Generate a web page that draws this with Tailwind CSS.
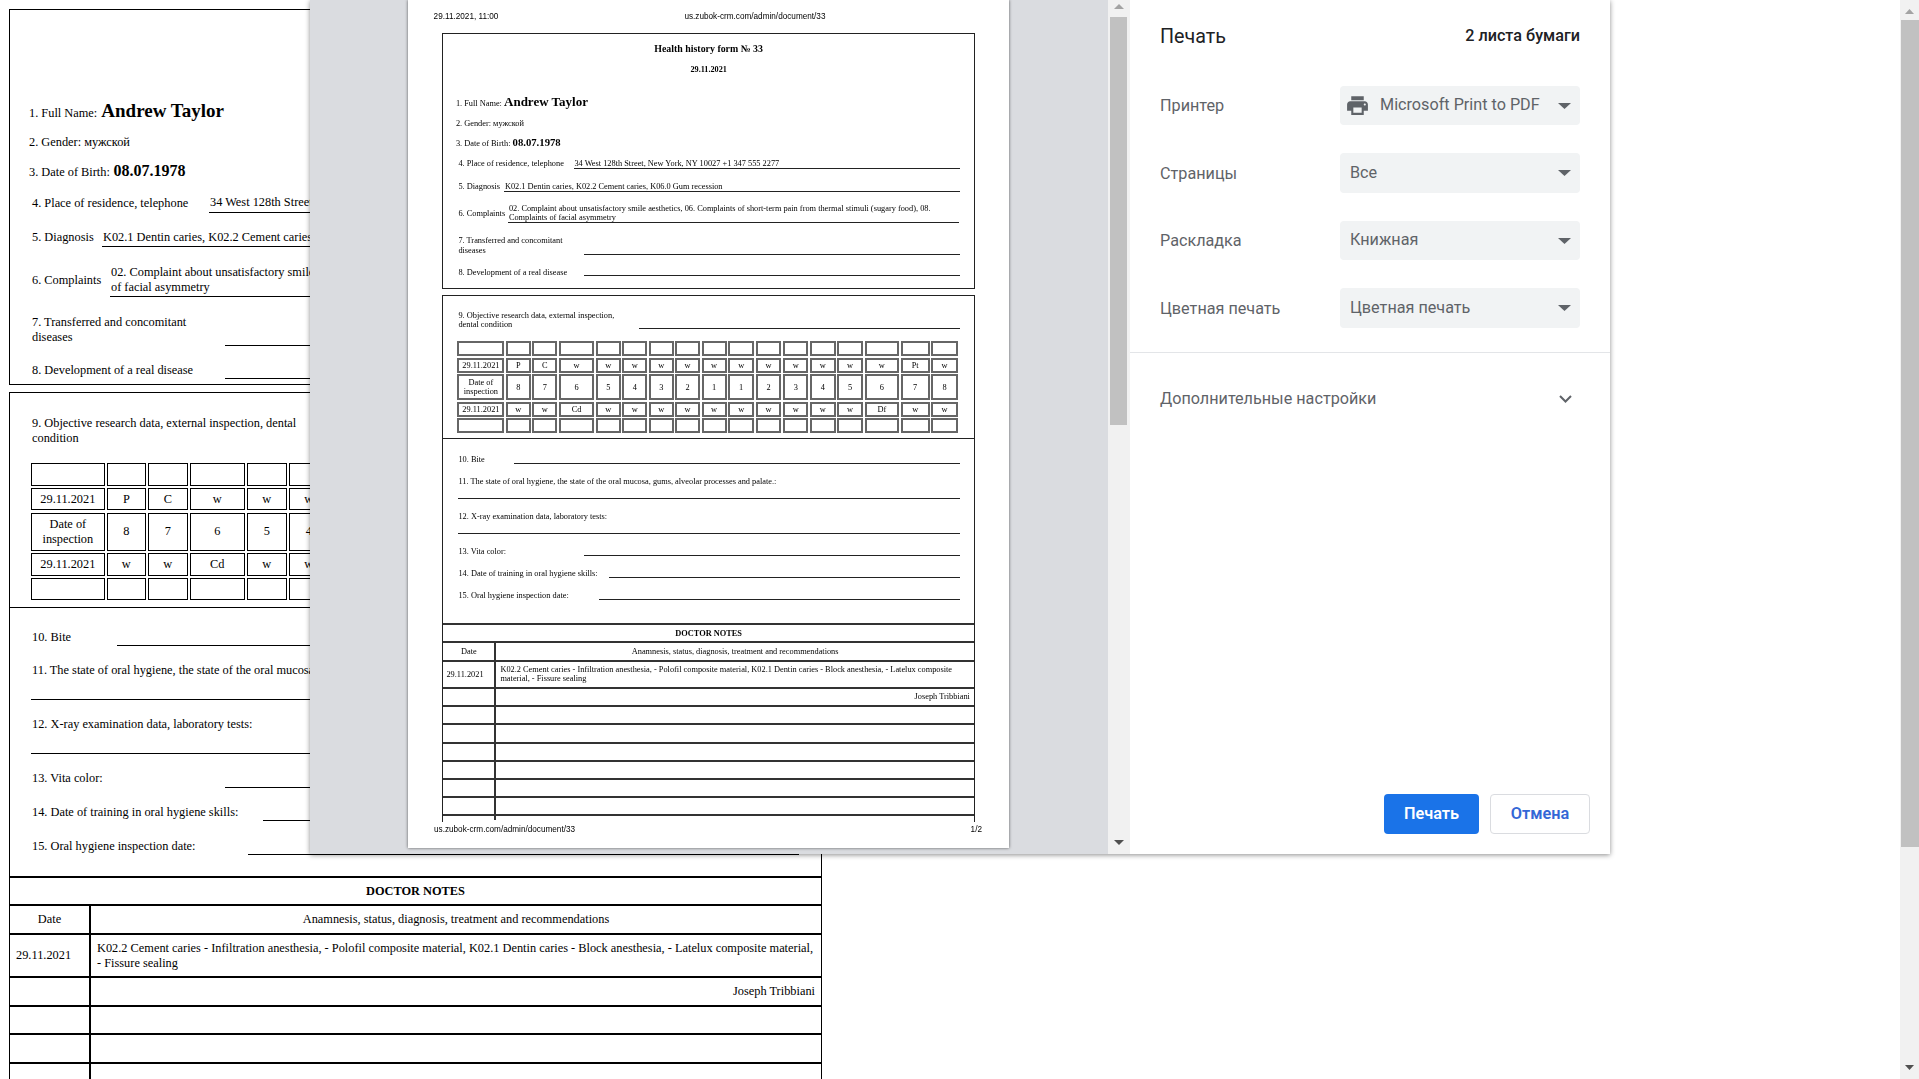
<!DOCTYPE html>
<html lang="ru">
<head>
    <meta charset="UTF-8">
    <title>Печать</title>
    <script src="https://cdn.jsdelivr.net/npm/@tailwindcss/browser@4"></script>
</head>
<body class="relative flex justify-between w-[1919px] h-[1079px] overflow-hidden bg-white text-black">

    <!-- document behind the print dialog -->
    <div class="w-[813px] ml-[9px] pt-[9px] font-['Liberation_Serif',serif] text-[12.35px] leading-[15px]">
        <section class="h-[376px] border border-black overflow-hidden">
            <div class="flex items-baseline mt-[90px] pl-[19px] h-[22px]">1. Full Name:&nbsp;<b class="ml-[1px] text-[19px] leading-[22px]">Andrew Taylor</b></div>
            <div class="mt-[12.5px] pl-[19px]">2. Gender: мужской</div>
            <div class="flex items-baseline mt-[12.5px] pl-[19px] h-[18px]">3. Date of Birth:&nbsp;<b class="ml-[0.5px] text-[16px] leading-[18px]">08.07.1978</b></div>
            <div class="flex items-end mt-[14.5px] pl-[22px] pr-[22px]">
                <span class="w-[177px] pb-[2px]">4. Place of residence, telephone</span>
                <span class="flex-1 border-b border-black pl-[1px] pb-[2px] whitespace-nowrap overflow-hidden">34 West 128th Street, New York, NY 10027 +1 347 555 2277</span>
            </div>
            <div class="flex items-end mt-[17.5px] pl-[22px] pr-[22px]">
                <span class="w-[70px] pb-[1.5px]">5. Diagnosis</span>
                <span class="flex-1 border-b border-black pl-[1px] pb-[0.5px]">K02.1 Dentin caries, K02.2 Cement caries, K06.0 Gum recession</span>
            </div>
            <div class="flex items-center mt-[18px] pl-[22px] pr-[22px]">
                <span class="w-[78px]">6. Complaints</span>
                <span class="flex-1 border-b border-black pl-[1px] pb-[1px] whitespace-nowrap overflow-hidden">02. Complaint about unsatisfactory smile aesthetics, 06. Complaints of short-term pain from thermal stimuli (sugary food), 08. Complaints<br>of facial asymmetry</span>
            </div>
            <div class="flex items-end mt-[18px] pl-[22px] pr-[22px]">
                <span class="w-[193px] pb-[1px]">7. Transferred and concomitant<br>diseases</span>
                <span class="flex-1 border-b border-black"></span>
            </div>
            <div class="flex items-end mt-[17px] pl-[22px] pr-[22px]">
                <span class="w-[193px] pb-[1px]">8. Development of a real disease</span>
                <span class="flex-1 border-b border-black"></span>
            </div>
        </section>

        <section class="mt-[7px] border-x border-t border-black">
            <div class="pb-[7px] border-b border-black">
                <div class="flex items-end mt-[23px] pl-[22px] pr-[22px]">
                    <span class="w-[400px]">9. Objective research data, external inspection, dental<br>condition</span>
                    <span class="flex-1 border-b border-black"></span>
                </div>
                <div id="bg-teeth" class="grid grid-cols-[73.7px_38.7px_39.7px_54.7px_39.7px_39.7px_39.7px_39.7px_39.7px_39.7px_39.7px_39.7px_39.7px_39.7px_54.7px_39.7px_39.7px] grid-rows-[22.5px_22px_38px_22.5px_22px] gap-x-[2.3px] gap-y-[2.5px] mt-[17px] ml-[21px] w-max"></div>
            </div>

            <div class="flex items-end mt-[21.5px] pl-[22px] pr-[22px]">
                <span class="w-[85px] pb-[1px]">10. Bite</span>
                <span class="flex-1 border-b border-black"></span>
            </div>
            <div class="mt-[17px] pl-[22px] whitespace-nowrap">11. The state of oral hygiene, the state of the oral mucosa, gums, alveolar processes and palate.:</div>
            <div class="mt-[21.7px] ml-[21px] mr-[22px] border-t border-black"></div>
            <div class="mt-[16.5px] pl-[22px]">12. X-ray examination data, laboratory tests:</div>
            <div class="mt-[21.7px] ml-[21px] mr-[22px] border-t border-black"></div>
            <div class="flex items-end mt-[16.5px] pl-[22px] pr-[22px]">
                <span class="w-[193px] pb-[2px]">13. Vita color:</span>
                <span class="flex-1 border-b border-black"></span>
            </div>
            <div class="flex items-end mt-[17px] pl-[22px] pr-[22px]">
                <span class="w-[231px] pb-[1.5px]">14. Date of training in oral hygiene skills:</span>
                <span class="flex-1 border-b border-black"></span>
            </div>
            <div class="flex items-end mt-[17.5px] pl-[22px] pr-[22px]">
                <span class="w-[216px] pb-[1px]">15. Oral hygiene inspection date:</span>
                <span class="flex-1 border-b border-black"></span>
            </div>

            <div class="mt-[21.5px]">
                <div class="h-[27.5px] border-t-2 border-black flex items-center justify-center font-bold">DOCTOR NOTES</div>
                <div class="flex h-[29px] border-t-2 border-black">
                    <div class="w-[81px] border-r-2 border-black flex items-center justify-center">Date</div>
                    <div class="flex-1 flex items-center justify-center">Anamnesis, status, diagnosis, treatment and recommendations</div>
                </div>
                <div class="flex h-[43px] border-t-2 border-black">
                    <div class="w-[81px] border-r-2 border-black flex items-center pl-[6px]">29.11.2021</div>
                    <div class="flex-1 flex items-center pl-[6px] pt-[2px]"><span class="whitespace-nowrap">K02.2 Cement caries - Infiltration anesthesia, - Polofil composite material, K02.1 Dentin caries - Block anesthesia, - Latelux composite material,<br>- Fissure sealing</span></div>
                </div>
                <div class="flex h-[29.5px] border-t-2 border-black">
                    <div class="w-[81px] border-r-2 border-black"></div>
                    <div class="flex-1 flex items-center justify-end pr-[6px]">Joseph Tribbiani</div>
                </div>
                <div class="flex h-[28px] border-t-2 border-black"><div class="w-[81px] border-r-2 border-black"></div></div>
                <div class="flex h-[29px] border-t-2 border-black"><div class="w-[81px] border-r-2 border-black"></div></div>
                <div class="flex h-[29px] border-t-2 border-black"><div class="w-[81px] border-r-2 border-black"></div></div>
            </div>
        </section>
    </div>

    <!-- browser scrollbar -->
    <div class="relative w-[19px] h-full bg-[#f1f1f1]">
        <svg class="absolute left-[5px] top-[9px]" width="9" height="5" viewBox="0 0 9 5"><path d="M4.5 0L9 5H0z" fill="#a3a3a3"/></svg>
        <div class="absolute left-[1px] right-0 top-[20px] h-[827px] bg-[#c1c1c1]"></div>
        <svg class="absolute left-[5px] bottom-[9px]" width="9" height="5" viewBox="0 0 9 5"><path d="M0 0h9L4.5 5z" fill="#505050"/></svg>
    </div>

    <!-- print dialog -->
    <div class="absolute left-[310px] top-0 flex w-[1300px] h-[854px] shadow-[0_1px_5px_rgba(0,0,0,0.45)]">

        <div class="w-[798px] h-full bg-[#dadce0] overflow-hidden">
            <div class="ml-[98px] w-[601px] h-[848px] bg-white shadow-[0_0_3px_rgba(0,0,0,0.6)]">
                <div class="blur-[0.25px] text-black">
                    <div class="flex items-center h-[33px] pt-[2px] pl-[25.6px] font-['Liberation_Sans',sans-serif] text-[8.2px]">
                        <span>29.11.2021, 11:00</span>
                        <span class="ml-[186px]">us.zubok-crm.com/admin/document/33</span>
                    </div>

                    <div class="ml-[34.4px] w-[532.5px] font-['Liberation_Serif',serif] text-[8.33px] leading-[9px]">
                        <section class="h-[255.5px] border border-[#222] overflow-hidden">
                            <div class="mt-[9.7px] text-center font-bold text-[9.9px] leading-[10px]">Health history form № 33</div>
                            <div class="mt-[11.3px] text-center font-bold text-[8.2px] leading-[10px]">29.11.2021</div>
                            <div class="flex items-baseline mt-[20.2px] h-[14px] pl-[12.5px]">1. Full Name:&nbsp;<b class="text-[13px] leading-[14px]">Andrew Taylor</b></div>
                            <div class="mt-[10px] pl-[12.5px] leading-[10px]">2. Gender: мужской</div>
                            <div class="flex items-baseline mt-[6.8px] h-[12px] pl-[12.5px]">3. Date of Birth:&nbsp;<b class="text-[10.7px] leading-[12px]">08.07.1978</b></div>
                            <div class="flex items-end mt-[11px] pl-[15px] pr-[13.5px]">
                                <span class="w-[115.5px] pb-[1px]">4. Place of residence, telephone</span>
                                <span class="flex-1 border-b border-[#222] pl-[0.5px] pb-[0.5px]">34 West 128th Street, New York, NY 10027 +1 347 555 2277</span>
                            </div>
                            <div class="flex items-end mt-[12.2px] pl-[15px] pr-[13.5px]">
                                <span class="w-[46px] pb-[0.5px]">5. Diagnosis</span>
                                <span class="flex-1 border-b border-[#222] pl-[0.5px]">K02.1 Dentin caries, K02.2 Cement caries, K06.0 Gum recession</span>
                            </div>
                            <div class="flex items-center mt-[12.3px] pl-[15px] pr-[14.5px]">
                                <span class="w-[50px]">6. Complaints</span>
                                <span class="flex-1 border-b border-[#222] pl-[0.5px] pb-[0.5px] whitespace-nowrap overflow-hidden">02. Complaint about unsatisfactory smile aesthetics, 06. Complaints of short-term pain from thermal stimuli (sugary food), 08.<br>Complaints of facial asymmetry</span>
                            </div>
                            <div class="flex items-end mt-[12.2px] pl-[15px] pr-[13.5px]">
                                <span class="w-[125.5px] leading-[10px]">7. Transferred and concomitant<br>diseases</span>
                                <span class="flex-1 mb-[0.7px] border-b border-[#222]"></span>
                            </div>
                            <div class="flex items-end mt-[12.8px] pl-[15px] pr-[13.5px]">
                                <span class="w-[125.5px]">8. Development of a real disease</span>
                                <span class="flex-1 mb-[1px] border-b border-[#222]"></span>
                            </div>
                        </section>

                        <section class="mt-[6.5px] h-[526.5px] border-x border-t border-[#222] overflow-hidden">
                            <div class="pb-[5px] border-b border-[#222]">
                                <div class="flex items-end mt-[15.3px] pl-[15px] pr-[13.5px]">
                                    <span class="w-[180.5px]">9. Objective research data, external inspection,<br>dental condition</span>
                                    <span class="flex-1 border-b border-[#222]"></span>
                                </div>
                                <div id="pv-teeth" class="grid grid-cols-[47px_24.7px_25px_35.3px_25px_25px_24.7px_24.7px_25px_26.2px_25.5px_25.5px_25.5px_25.8px_34.5px_29px_26.5px] grid-rows-[15px_15px_26.3px_14.7px_15px] gap-[1.6px] mt-[11.7px] ml-[14px] w-max"></div>
                            </div>

                            <div class="flex items-end mt-[15.8px] pl-[15px] pr-[13.5px]">
                                <span class="w-[56px]">10. Bite</span>
                                <span class="flex-1 border-b border-[#222]"></span>
                            </div>
                            <div class="mt-[13px] pl-[15px]">11. The state of oral hygiene, the state of the oral mucosa, gums, alveolar processes and palate.:</div>
                            <div class="mt-[12px] ml-[14.5px] mr-[13.5px] border-t border-[#222]"></div>
                            <div class="mt-[13.3px] pl-[15px]">12. X-ray examination data, laboratory tests:</div>
                            <div class="mt-[12px] ml-[14.5px] mr-[13.5px] border-t border-[#222]"></div>
                            <div class="flex items-end mt-[12.7px] pl-[15px] pr-[13.5px]">
                                <span class="w-[126px]">13. Vita color:</span>
                                <span class="flex-1 border-b border-[#222]"></span>
                            </div>
                            <div class="flex items-end mt-[12.6px] pl-[15px] pr-[13.5px]">
                                <span class="w-[150.5px]">14. Date of training in oral hygiene skills:</span>
                                <span class="flex-1 border-b border-[#222]"></span>
                            </div>
                            <div class="flex items-end mt-[13.4px] pl-[15px] pr-[13.5px]">
                                <span class="w-[140.5px]">15. Oral hygiene inspection date:</span>
                                <span class="flex-1 border-b border-[#222]"></span>
                            </div>

                            <div class="mt-[23px]">
                                <div class="h-[18px] pt-[1px] border-t-2 border-[#333] flex items-center justify-center font-bold">DOCTOR NOTES</div>
                                <div class="flex h-[18.6px] border-t-2 border-[#333]">
                                    <div class="w-[53px] border-r-2 border-[#333] flex items-center justify-center">Date</div>
                                    <div class="flex-1 flex items-center justify-center">Anamnesis, status, diagnosis, treatment and recommendations</div>
                                </div>
                                <div class="flex h-[27px] border-t-2 border-[#333]">
                                    <div class="w-[53px] border-r-2 border-[#333] flex items-center pl-[3px]">29.11.2021</div>
                                    <div class="flex-1 flex items-center pl-[4px]"><span class="whitespace-nowrap">K02.2 Cement caries - Infiltration anesthesia, - Polofil composite material, K02.1 Dentin caries - Block anesthesia, - Latelux composite<br>material, - Fissure sealing</span></div>
                                </div>
                                <div class="flex h-[18px] border-t-2 border-[#333]">
                                    <div class="w-[53px] border-r-2 border-[#333]"></div>
                                    <div class="flex-1 flex items-center justify-end pr-[4px]">Joseph Tribbiani</div>
                                </div>
                                <div class="flex h-[18.7px] border-t-2 border-[#333]"><div class="w-[53px] border-r-2 border-[#333]"></div></div>
                                <div class="flex h-[18.3px] border-t-2 border-[#333]"><div class="w-[53px] border-r-2 border-[#333]"></div></div>
                                <div class="flex h-[18px] border-t-2 border-[#333]"><div class="w-[53px] border-r-2 border-[#333]"></div></div>
                                <div class="flex h-[18.4px] border-t-2 border-[#333]"><div class="w-[53px] border-r-2 border-[#333]"></div></div>
                                <div class="flex h-[18px] border-t-2 border-[#333]"><div class="w-[53px] border-r-2 border-[#333]"></div></div>
                                <div class="flex h-[18.3px] border-t-2 border-[#333]"><div class="w-[53px] border-r-2 border-[#333]"></div></div>
                                <div class="flex h-[6px] border-t-2 border-[#333]"><div class="w-[53px] border-r-2 border-[#333]"></div></div>
                            </div>
                        </section>
                    </div>

                    <div class="flex items-center justify-between h-[16px] pt-[2px] pl-[26px] pr-[27px] font-['Liberation_Sans',sans-serif] text-[8.2px]">
                        <span>us.zubok-crm.com/admin/document/33</span>
                        <span>1/2</span>
                    </div>
                </div>
            </div>
        </div>

        <!-- preview scrollbar -->
        <div class="relative w-[22px] h-full bg-[#f1f1f1]">
            <svg class="absolute left-[6px] top-[4px]" width="10" height="5" viewBox="0 0 10 5"><path d="M5 0l5 5H0z" fill="#a3a3a3"/></svg>
            <div class="absolute left-[2px] w-[17px] top-[17px] h-[408px] bg-[#c1c1c1]"></div>
            <svg class="absolute left-[6px] bottom-[9px]" width="10" height="5" viewBox="0 0 10 5"><path d="M0 0h10L5 5z" fill="#505050"/></svg>
        </div>

        <!-- settings sidebar -->
        <aside class="relative w-[480px] h-full bg-white font-['Roboto',sans-serif] text-[#5f6368] text-[16.2px]">
            <div class="flex items-center justify-between h-[73px] pl-[30px] pr-[30px]">
                <h1 class="text-[19.7px] text-[#202124]">Печать</h1>
                <span class="font-medium text-[16.2px] text-[#202124]">2 листа бумаги</span>
            </div>

            <div class="flex items-center justify-between mt-[13px] pl-[30px] pr-[30px]">
                <span class="pt-[1px]">Принтер</span>
                <div class="flex items-center w-[240px] h-[39px] pl-[5px] pr-[9px] rounded bg-[#f1f3f4]">
                    <svg class="w-[25px] h-[25px]" viewBox="0 0 24 24" fill="#5f6368"><path d="M19 8H5c-1.66 0-3 1.34-3 3v6h4v4h12v-4h4v-6c0-1.66-1.34-3-3-3zm-3 11H8v-5h8v5zm3-7c-.55 0-1-.45-1-1s.45-1 1-1 1 .45 1 1-.45 1-1 1zm-1-9H6v4h12V3z"/></svg>
                    <span class="ml-[10px] flex-1">Microsoft Print to PDF</span>
                    <svg width="13" height="6" viewBox="0 0 13 6"><path d="M0 0h13L6.5 6z" fill="#5f6368"/></svg>
                </div>
            </div>
            <div class="flex items-center justify-between mt-[28px] pl-[30px] pr-[30px]">
                <span class="pt-[2px]">Страницы</span>
                <div class="flex items-center w-[240px] h-[40px] pl-[10px] pr-[9px] rounded bg-[#f1f3f4]">
                    <span class="flex-1">Все</span>
                    <svg width="13" height="6" viewBox="0 0 13 6"><path d="M0 0h13L6.5 6z" fill="#5f6368"/></svg>
                </div>
            </div>
            <div class="flex items-center justify-between mt-[28px] pl-[30px] pr-[30px]">
                <span class="pt-[2px]">Раскладка</span>
                <div class="flex items-center w-[240px] h-[39px] pl-[10px] pr-[9px] rounded bg-[#f1f3f4]">
                    <span class="flex-1">Книжная</span>
                    <svg width="13" height="6" viewBox="0 0 13 6"><path d="M0 0h13L6.5 6z" fill="#5f6368"/></svg>
                </div>
            </div>
            <div class="flex items-center justify-between mt-[28px] pl-[30px] pr-[30px]">
                <span class="pt-[2px]">Цветная печать</span>
                <div class="flex items-center w-[240px] h-[40px] pl-[10px] pr-[9px] rounded bg-[#f1f3f4]">
                    <span class="flex-1">Цветная печать</span>
                    <svg width="13" height="6" viewBox="0 0 13 6"><path d="M0 0h13L6.5 6z" fill="#5f6368"/></svg>
                </div>
            </div>

            <div class="mt-[24px] border-t border-[#e3e5e8]"></div>
            <div class="flex items-center justify-between h-[93px] pl-[30px] pr-[38px]">
                <span>Дополнительные настройки</span>
                <svg class="mb-[2px]" width="13" height="8" viewBox="0 0 13 8" fill="none" stroke="#5f6368" stroke-width="2"><path d="M1 1l5.5 5.5L12 1"/></svg>
            </div>

            <div class="absolute right-[20px] bottom-[20px] flex gap-[11px] text-[16.3px] font-semibold">
                <button class="w-[95px] h-[40px] pt-[1px] rounded bg-[#1a73e8] text-white">Печать</button>
                <button class="w-[100px] h-[40px] pt-[1px] rounded border border-[#dadce0] bg-white text-[#3367d6]">Отмена</button>
            </div>
        </aside>
    </div>

    <script>
    const teeth = [
        ['', '', '', '', '', '', '', '', '', '', '', '', '', '', '', '', ''],
        ['29.11.2021', 'P', 'C', 'w', 'w', 'w', 'w', 'w', 'w', 'w', 'w', 'w', 'w', 'w', 'w', 'Pt', 'w'],
        ['Date of inspection', '8', '7', '6', '5', '4', '3', '2', '1', '1', '2', '3', '4', '5', '6', '7', '8'],
        ['29.11.2021', 'w', 'w', 'Cd', 'w', 'w', 'w', 'w', 'w', 'w', 'w', 'w', 'w', 'w', 'Df', 'w', 'w'],
        ['', '', '', '', '', '', '', '', '', '', '', '', '', '', '', '', '']
    ];

    function fillTeeth(id, cellClass) {
        const grid = document.getElementById(id);
        teeth.flat().forEach(text => {
            const cell = document.createElement('div');
            cell.className = cellClass;
            cell.textContent = text;
            grid.appendChild(cell);
        });
    }

    fillTeeth('bg-teeth', 'flex items-center justify-center text-center border border-black');
    fillTeeth('pv-teeth', 'flex items-center justify-center text-center border-2 border-[#666]');
    </script>
</body>
</html>
